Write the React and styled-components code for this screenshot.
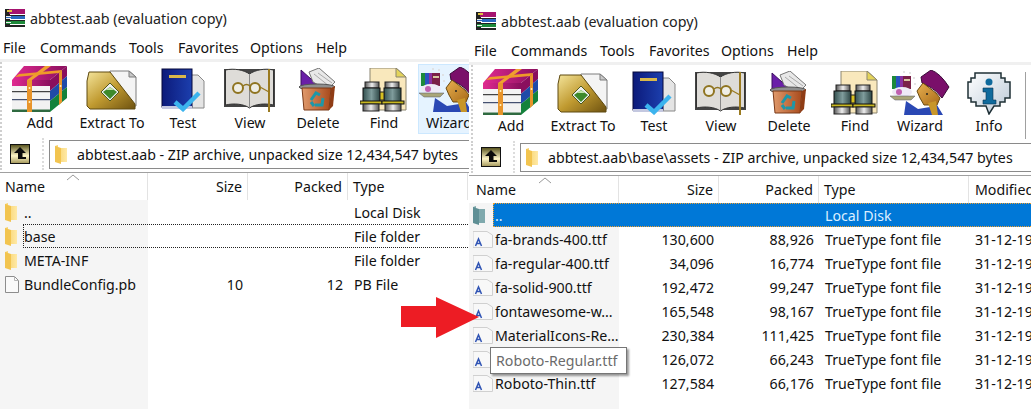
import React from "react";
import styled, { createGlobalStyle } from "styled-components";

const Global = createGlobalStyle`
  html, body { margin: 0; padding: 0; background: #fff; }
  #root { width: 1031px; height: 409px; overflow: hidden; }
`;

const Stage = styled.div`
  position: relative;
  display: flex;
  width: 1031px;
  height: 409px;
  overflow: hidden;
  font-family: "Noto Sans", "Open Sans", sans-serif;
  font-size: 14.2px;
  color: #111;
  background: #fff;
`;
const Window = styled.section`
  flex: 0 0 ${(p) => p.$width}px;
  width: ${(p) => p.$width}px;
  padding-top: ${(p) => p.$top}px;
  box-sizing: border-box;
  display: flex;
  flex-direction: column;
  overflow: hidden;
  background: #fff;
`;
const TitleBar = styled.div`
  height: 36px;
  display: flex;
  align-items: center;
  gap: 5px;
  padding: 0 0 0 ${(p) => 5 + p.$inset}px;
  font-size: 14.3px;
  color: #222;
`;
const MenuBar = styled.div`
  height: 23px;
  display: flex;
  align-items: center;
  padding-left: ${(p) => p.$inset}px;
  border-bottom: 3px solid #f0f0f0;
`;
const MenuItem = styled.span`
  width: ${(p) => p.$w}px;
  padding-left: 3px;
  box-sizing: border-box;
  flex: none;
`;
const Toolbar = styled.div`
  height: 74px;
  display: flex;
  padding-left: 2px;
  margin-left: ${(p) => p.$inset}px;
  align-items: stretch;
  overflow: hidden;
  border-left: 2px dotted #cfcfcf;
`;
const ToolButton = styled.div`
  flex: none;
  width: ${(p) => p.$w}px;
  margin-left: ${(p) => p.$ml || 0}px;
  margin-top: 2px;
  height: 70px;
  box-sizing: border-box;
  display: flex;
  flex-direction: column;
  align-items: center;
  padding-top: 2px;
  white-space: nowrap;
  ${(p) => p.$hover && "background:#e5f3ff;outline:1px solid #cce8ff;outline-offset:-1px;"}
`;
const IconSlot = styled.div`
  height: 46px;
  display: flex;
  align-items: flex-end;
  justify-content: center;
`;
const ToolLabel = styled.span`
  margin-top: 1px;
  line-height: 20px;
`;
const ToolSep = styled.div`
  flex: none;
  width: 1px;
  margin-top: 7px;
  background: #a0a0a0;
`;
const AddressRow = styled.div`
  height: 37px;
  display: flex;
  align-items: center;
  padding-left: ${(p) => p.$inset}px;
  border-bottom: 1px solid #a0a0a0;
  box-sizing: border-box;
`;
const Grip = styled.div`
  flex: none;
  width: 44px;
  height: 32px;
  box-sizing: border-box;
  display: flex;
  align-items: center;
  padding-left: 8px;
  border-left: 2px dotted #cfcfcf;
  border-right: 2px dotted #dcdcdc;
`;
const AddressBox = styled.div`
  flex: 1;
  min-width: 0;
  height: 29px;
  margin: 0 -3px 0 5px;
  box-sizing: border-box;
  border: 1px solid #8a8a8a;
  display: flex;
  align-items: center;
  gap: 9px;
  padding-left: 5px;
  white-space: nowrap;
`;
const Header = styled.div`
  height: 27px;
  display: grid;
  grid-template-columns: ${(p) => p.$columns};
  position: relative;
`;
const HeadCell = styled.div`
  display: flex;
  align-items: center;
  box-sizing: border-box;
  border-right: 1px solid #e3e3e3;
  padding: 0 5px 0 ${(p) => p.$pad}px;
  justify-content: ${(p) => (p.$right ? "flex-end" : "flex-start")};
  white-space: nowrap;
  overflow: hidden;
`;
const SortCaret = styled.svg`
  position: absolute;
  left: ${(p) => p.$left}px;
  top: 1px;
`;
const List = styled.div`
  flex: 1;
  background: linear-gradient(to right, #f5f5f5 ${(p) => p.$name}px, #fff ${(p) => p.$name}px);
`;
const Row = styled.div`
  height: 24px;
  display: flex;
  align-items: stretch;
`;
const RowIcon = styled.div`
  flex: none;
  width: ${(p) => p.$w}px;
  box-sizing: border-box;
  display: flex;
  align-items: center;
  padding-left: ${(p) => p.$pad}px;
`;
const RowBody = styled.div`
  flex: 1;
  display: grid;
  grid-template-columns: ${(p) => p.$columns};
  box-sizing: border-box;
  align-items: center;
  border: 1px dotted ${(p) => (p.$selected ? "#f0a030" : p.$focus ? "#222" : "transparent")};
  ${(p) => p.$selected && "background:#0078d7;color:#dcefff;"}
`;
const Cell = styled.span`
  box-sizing: border-box;
  padding: ${(p) => (p.$right ? "0 6px 0 0" : "0 0 0 " + (p.$pad ?? 5) + "px")};
  text-align: ${(p) => (p.$right ? "right" : "left")};
  white-space: nowrap;
  overflow: hidden;
`;
const Tooltip = styled.div`
  position: absolute;
  left: 490px;
  top: 347px;
  width: 137px;
  height: 27px;
  box-sizing: border-box;
  background: #fff;
  border: 1px solid #767676;
  box-shadow: 2px 2px 2px rgba(0,0,0,.4);
  color: #6b6b6b;
  padding-left: 5px;
  line-height: 25px;
  white-space: nowrap;
`;
const Arrow = styled.svg`
  position: absolute;
  left: 401px;
  top: 297px;
`;

const Defs = () => (
  <svg width="0" height="0" style={{ position: "absolute" }} aria-hidden="true">
    <defs>
      <linearGradient id="gold" x1="0" y1="0" x2="1" y2="1">
        <stop offset="0" stopColor="#f4e49a" />
        <stop offset=".5" stopColor="#c09a30" />
        <stop offset="1" stopColor="#6e5210" />
      </linearGradient>
      <linearGradient id="folder" x1="0" y1="0" x2="1" y2="0">
        <stop offset="0" stopColor="#f6cf62" />
        <stop offset="1" stopColor="#ffe9a6" />
      </linearGradient>
      <linearGradient id="navy" x1="0" y1="0" x2="1" y2="0">
        <stop offset="0" stopColor="#0c1a7a" />
        <stop offset="1" stopColor="#1c3fae" />
      </linearGradient>
      <linearGradient id="steel" x1="0" y1="0" x2="1" y2="0">
        <stop offset="0" stopColor="#33504f" />
        <stop offset=".5" stopColor="#7f9c9c" />
        <stop offset="1" stopColor="#2c4544" />
      </linearGradient>
      <linearGradient id="chrome" x1="0" y1="0" x2="1" y2="0">
        <stop offset="0" stopColor="#555" />
        <stop offset=".5" stopColor="#eee" />
        <stop offset="1" stopColor="#555" />
      </linearGradient>
      <linearGradient id="brown" x1="0" y1="0" x2="1" y2="0">
        <stop offset="0" stopColor="#e09a6c" />
        <stop offset="1" stopColor="#a84a1c" />
      </linearGradient>
      <linearGradient id="up" x1="0" y1="0" x2="0" y2="1">
        <stop offset="0" stopColor="#5a5520" />
        <stop offset=".6" stopColor="#fff6c8" />
        <stop offset="1" stopColor="#a89c60" />
      </linearGradient>
      <linearGradient id="bubble" x1="0" y1="0" x2="1" y2="1">
        <stop offset="0" stopColor="#fff" />
        <stop offset="1" stopColor="#b9c8d6" />
      </linearGradient>
      <linearGradient id="face" x1="0" y1="0" x2="1" y2="1">
        <stop offset="0" stopColor="#e8b050" />
        <stop offset="1" stopColor="#a86a18" />
      </linearGradient>
      <linearGradient id="magenta" x1="0" y1="0" x2="1" y2="0">
        <stop offset="0" stopColor="#e02a90" />
        <stop offset="1" stopColor="#8a0f5e" />
      </linearGradient>
      <linearGradient id="paper" x1="0" y1="0" x2="1" y2="1">
        <stop offset="0" stopColor="#f6f6f6" />
        <stop offset="1" stopColor="#c4c4c4" />
      </linearGradient>
    </defs>
  </svg>
);

const RarIcon = () => (
  <svg width="56" height="46" viewBox="0 0 56 46">
    <polygon points="12,0 55,0 38,14 0,14" fill="url(#magenta)" />
    <rect x="0" y="14" width="38" height="6" fill="url(#magenta)" />
    <rect x="0" y="20" width="38" height="5" fill="#f4f4f4" />
    <rect x="0" y="25" width="38" height="1.5" fill="#444" />
    <rect x="0" y="26.5" width="38" height="7" fill="#f4f4f4" />
    <rect x="0" y="33" width="38" height="1.5" fill="#445070" />
    <rect x="0" y="34.5" width="38" height="9" fill="#f2f2f2" />
    <rect x="0" y="43.5" width="38" height="2.5" fill="#2f6a40" />
    <polygon points="38,14 55,0 55,10 38,25" fill="#8a0f5e" />
    <polygon points="38,25 55,10 55,21 38,35" fill="#1f4aa8" />
    <polygon points="38,35 55,21 55,32 38,46" fill="#14823c" />
    <polygon points="15,14 20,14 39,0 33,0" fill="#f0a030" />
    <polygon points="7,8 50,4 47,7 3,11" fill="#ee9a2a" />
    <rect x="15" y="14" width="5" height="32" fill="#e8942a" />
    <polygon points="47,7 50,4 50,36 47,39" fill="#e8942a" />
    <circle cx="17.500" cy="22" r="1" fill="#fff3c0" />
    <circle cx="17.500" cy="36" r="1" fill="#fff3c0" />
    <circle cx="48.500" cy="20" r="1" fill="#fff3c0" />
  </svg>
);
const SmallRar = () => (
  <svg width="20" height="20" viewBox="0 0 20 20">
    <polygon points="0,1 5,1 5,19 0,19" fill="#222" />
    <polygon points="4,1 20,1 20,6 4,6" fill="#a5136f" />
    <rect x="1" y="7" width="19" height="1" fill="#222" />
    <rect x="1" y="8" width="19" height="3" fill="#2a6ac0" />
    <rect x="1" y="12" width="19" height="1" fill="#222" />
    <rect x="1" y="13" width="19" height="3" fill="#1d8a3a" />
    <rect x="1" y="17" width="19" height="2" fill="#222" />
    <rect x="2" y="2" width="5" height="2" fill="#e0c040" />
    <rect x="1" y="8" width="5" height="1" fill="#eee" />
    <rect x="1" y="10" width="5" height="1" fill="#eee" />
    <rect x="1" y="14" width="5" height="1" fill="#eee" />
  </svg>
);
const ExtractIcon = () => (
  <svg width="52" height="44" viewBox="0 0 52 44">
    <polygon points="24,3 43,3 50,9 50,38 24,38" fill="#f4f4f4" stroke="#7d7d7d" />
    <polygon points="43,3 43,9 50,9" fill="#c8c8c8" stroke="#7d7d7d" />
    <polygon points="1,13 3,4 24,4 49,36 49,41 4,41 1,38" fill="url(#gold)" stroke="#5e4a10" />
    <polygon points="24,33 15,24 24,15 33,24" fill="#f0f0f0" stroke="#4d5a20" />
    <polygon points="24,31 17,24 24,19 31,24" fill="#3d8a2c" />
    <polygon points="24,19 20,22 28,22" fill="#c0e4a8" />
  </svg>
);
const TestIcon = () => (
  <svg width="44" height="44" viewBox="0 0 44 44">
    <polygon points="28,7 37,7 43,13 43,40 28,40" fill="#e4e4e4" stroke="#888" />
    <rect x="1" y="1" width="30" height="38" fill="url(#navy)" stroke="#06083a" />
    <rect x="8" y="7" width="17" height="3" fill="#d9b84a" />
    <rect x="1" y="38" width="30" height="3" fill="#c4c8e0" />
    <path d="M14 34 L22 41 L38 25" fill="none" stroke="#3cb4ee" strokeWidth="4.5" />
  </svg>
);
const ViewIcon = () => (
  <svg width="52" height="44" viewBox="0 0 52 44">
    <rect x="0" y="1" width="51" height="38" fill="#444" />
    <path d="M1.500 2 C10 0 20 2 25.500 6 C31 2 41 0 49.500 2 V37 C41 35 31 36 25.500 40 C20 36 10 35 1.500 37 Z" fill="#dedcd8" stroke="#333" />
    <line x1="25.500" y1="6" x2="25.500" y2="40" stroke="#888" />
    <circle cx="14" cy="20" r="5" fill="#efeee6" stroke="#8f7420" strokeWidth="2" />
    <circle cx="31" cy="20" r="5" fill="#efeee6" stroke="#8f7420" strokeWidth="2" />
    <path d="M19 18 Q22.500 15 26 18" fill="none" stroke="#8f7420" strokeWidth="1.5" />
    <path d="M45 1 V44" stroke="#9a7a20" strokeWidth="2" />
    <path d="M36 19 L45 24" stroke="#9a7a20" strokeWidth="1.300" />
  </svg>
);
const DeleteIcon = () => (
  <svg width="38" height="44" viewBox="0 0 38 44">
    <polygon points="2,2 2,20 22,20" fill="#6a1fa8" stroke="#3c1060" />
    <polygon points="10,4 20,0 36,14 28,22 14,14" fill="#e8e8e8" stroke="#777" />
    <path d="M15 6 L30 18 M19 5 L33 15" stroke="#aaa" />
    <ellipse cx="18" cy="19" rx="18" ry="3" fill="#8f8f8f" stroke="#555" />
    <polygon points="3,20 32,20 30,42 5,42" fill="url(#brown)" stroke="#7a3a18" />
    <polygon points="32,20 36,18 34,38 30,42" fill="#8f3c15" />
    <path d="M12 32 L17 25 L21 27 M24 30 L23 37 L16 37 M12 34 L15 38" fill="none" stroke="#1d97a8" strokeWidth="3" />
  </svg>
);
const FindIcon = () => (
  <svg width="48" height="44" viewBox="0 0 48 44">
    <polygon points="10,0 36,0 46,9 46,42 10,42" fill="#f9e8bc" stroke="#8b8570" />
    <polygon points="36,0 36,9 46,9" fill="#e4d45a" stroke="#8b8570" />
    <rect x="5" y="14" width="14" height="6" fill="url(#chrome)" stroke="#222" />
    <rect x="25" y="14" width="14" height="6" fill="url(#chrome)" stroke="#222" />
    <rect x="3" y="20" width="17" height="14" fill="url(#steel)" stroke="#111" />
    <rect x="24" y="20" width="17" height="14" fill="url(#steel)" stroke="#111" />
    <rect x="20" y="24" width="4" height="8" fill="#d6c020" stroke="#222" />
    <rect x="0" y="33" width="22" height="3" fill="#c8b820" stroke="#111" />
    <rect x="22" y="33" width="22" height="3" fill="#c8b820" stroke="#111" />
    <rect x="3" y="36" width="16" height="7" fill="url(#chrome)" stroke="#222" />
    <rect x="25" y="36" width="16" height="7" fill="url(#chrome)" stroke="#222" />
  </svg>
);
const WizardIcon = () => (
  <svg width="60" height="45" viewBox="0 0 60 45">
    <rect x="2" y="6" width="19" height="13" fill="#7a2048" />
    <rect x="2" y="6" width="4" height="13" fill="#1d8a3a" />
    <rect x="6" y="6" width="4" height="13" fill="#2a52c0" />
    <rect x="10" y="6" width="3" height="13" fill="#8a30a0" />
    <rect x="14" y="9" width="6" height="2" fill="#d8c8a0" />
    <ellipse cx="12" cy="22" rx="10" ry="5" fill="#eeeaf6" />
    <circle cx="9" cy="22" r="3" fill="#c060b0" />
    <path d="M0 26 H25 L21 30 H5 Z" fill="#a9a678" stroke="#556" strokeWidth=".5" />
    <circle cx="20" cy="3" r="1" fill="#ddd" /><circle cx="24" cy="8" r="1" fill="#ddd" /><circle cx="25" cy="14" r="1" fill="#ddd" /><circle cx="14" cy="2" r="1" fill="#ddd" />
    <path d="M31 7 L41 0 Q50 3 59 17 L52 28 Q46 20 40 17 L32 13 Z" fill="#7a0f6a" stroke="#3a0a38" />
    <polygon points="27,21 33,13 46,23 50,28 47,35 34,35 30,28" fill="url(#face)" stroke="#6a4a10" />
    <polygon points="14,45 16,31 28,39 40,37 47,35 53,45" fill="#2a48b4" />
    <polygon points="38,33 46,31 48,45 42,45" fill="#c89628" />
    <circle cx="37" cy="24" r="1" fill="#222" />
  </svg>
);
const InfoIcon = () => (
  <svg width="44" height="44" viewBox="0 0 44 44">
    <path d="M8 2 H34 V7 H38 V11 H43 V27 H38 V31 H33 V35 H27 L22 43 L19 35 H9 V31 H4 V27 H1 V11 H4 V7 H8 Z" fill="url(#bubble)" stroke="#1f3036" strokeWidth="1.500" />
    <circle cx="22" cy="11" r="3.500" fill="#0f6a9c" />
    <path d="M16 17 H26 V29 H29 V33 H16 V29 H19 V21 H16 Z" fill="#0f6a9c" stroke="#0a3350" strokeWidth=".6" />
  </svg>
);
const UpIcon = () => (
  <svg width="20" height="20" viewBox="0 0 20 20">
    <rect width="20" height="20" fill="#111" />
    <rect x="1" y="1" width="18" height="18" fill="url(#up)" />
    <path d="M10 3 L16 9 H12.500 V13 H16 V15 H8 V9 H4 Z" fill="#0c0c0c" />
  </svg>
);
const FolderIcon = ({ teal }) => (
  <svg width="13" height="19" viewBox="0 0 13 19">
    <polygon points="0,1 3,0 3,3 12,3 12,17 0,17" fill={teal ? "#7fa9ad" : "url(#folder)"} />
    <polygon points="0,1 6,3 6,19 0,17" fill={teal ? "#5f8f95" : "#f2c44f"} />
  </svg>
);
const PageIcon = () => (
  <svg width="14" height="17" viewBox="0 0 14 17">
    <path d="M.5 .5 H9.5 L13.5 4.5 V16.5 H.5 Z" fill="#fafafa" stroke="#8d8d8d" />
    <path d="M9.5 .5 V4.5 H13.5" fill="none" stroke="#b5b5b5" />
  </svg>
);
const FontIcon = () => (
  <svg width="20" height="17" viewBox="0 0 20 17">
    <path d="M0 .5 H14 L19.500 4 V16.500 H0 Z" fill="#f8f8f8" stroke="#d0d0d0" />
    <path d="M2.500 15 L5.500 8 L8.500 15 M4 12.500 H7" fill="none" stroke="#3054b4" strokeWidth="1.500" />
  </svg>
);

const tools = [
  ["Add", 72, 0, <RarIcon key="i" />],
  ["Extract To", 72, 0, <ExtractIcon key="i" />],
  ["Test", 70, 0, <TestIcon key="i" />],
  ["View", 64, 0, <ViewIcon key="i" />],
  ["Delete", 72, 0, <DeleteIcon key="i" />],
  ["Find", 60, 0, <FindIcon key="i" />],
  ["Wizard", 62, 4, <WizardIcon key="i" />],
  ["Info", 72, 2, <InfoIcon key="i" />],
];
const menus = [["File", 37], ["Commands", 89], ["Tools", 49], ["Favorites", 72], ["Options", 66], ["Help", 50]];

const WindowChrome = ({ inset, top, width, address, nameW, hoverWizard, sep, rows, iconW, iconPad, caret, labelPad, modified, toolCount }) => {
  const tail = modified ? " 150px 200px" : " 120px";
  const head = `${nameW}px 100px 100px${tail}`;
  const body = `${nameW - iconW}px 100px 100px${tail}`;
  return (
    <Window $width={width} $top={top}>
      <TitleBar $inset={inset}><SmallRar />abbtest.aab (evaluation copy)</TitleBar>
      <MenuBar $inset={inset}>
        {menus.map(([m, w]) => <MenuItem key={m} $w={w}>{m}</MenuItem>)}
      </MenuBar>
      <Toolbar $inset={inset}>
        {tools.slice(0, toolCount).map(([label, w, ml, icon]) => (
          <ToolButton key={label} $w={w} $ml={ml} $hover={hoverWizard && label === "Wizard"}>
            <IconSlot>{icon}</IconSlot>
            <ToolLabel>{label}</ToolLabel>
          </ToolButton>
        ))}
        {sep && <ToolSep />}
      </Toolbar>
      <AddressRow $inset={inset}>
        <Grip><UpIcon /></Grip>
        <AddressBox><FolderIcon />{address}</AddressBox>
      </AddressRow>
      <Header $columns={head}>
        <HeadCell $pad={nameW === 150 ? 7 : 5}>Name</HeadCell>
        <HeadCell $pad={0} $right>Size</HeadCell>
        <HeadCell $pad={0} $right>Packed</HeadCell>
        <HeadCell $pad={5}>Type</HeadCell>
        {modified && <HeadCell $pad={6}>Modified</HeadCell>}
        <SortCaret $left={caret} width="14" height="7" viewBox="0 0 14 7"><path d="M1 6 L7 1 L13 6" fill="none" stroke="#9a9a9a" /></SortCaret>
      </Header>
      <List $name={nameW}>
        {rows.map((r) => (
          <Row key={r.name}>
            <RowIcon $w={iconW} $pad={iconPad}>{r.icon}</RowIcon>
            <RowBody $columns={body} $selected={r.selected} $focus={r.focus}>
              <Cell $pad={labelPad}>{r.name}</Cell>
              <Cell $right>{r.size}</Cell>
              <Cell $right>{r.packed}</Cell>
              <Cell>{r.type}</Cell>
              {modified && <Cell>{r.date}</Cell>}
            </RowBody>
          </Row>
        ))}
      </List>
    </Window>
  );
};

const leftRows = [
  { name: "..", type: "Local Disk", icon: <FolderIcon /> },
  { name: "base", type: "File folder", icon: <FolderIcon />, focus: true },
  { name: "META-INF", type: "File folder", icon: <FolderIcon /> },
  { name: "BundleConfig.pb", size: "10", packed: "12", type: "PB File", icon: <PageIcon /> },
];
const ttf = "TrueType font file";
const d = "31-12-1980";
const rightRows = [
  { name: "..", type: "Local Disk", icon: <FolderIcon teal />, selected: true },
  { name: "fa-brands-400.ttf", size: "130,600", packed: "88,926", type: ttf, date: d, icon: <FontIcon /> },
  { name: "fa-regular-400.ttf", size: "34,096", packed: "16,774", type: ttf, date: d, icon: <FontIcon /> },
  { name: "fa-solid-900.ttf", size: "192,472", packed: "99,247", type: ttf, date: d, icon: <FontIcon /> },
  { name: "fontawesome-w...", size: "165,548", packed: "98,167", type: ttf, date: d, icon: <FontIcon /> },
  { name: "MaterialIcons-Re...", size: "230,384", packed: "111,425", type: ttf, date: d, icon: <FontIcon /> },
  { name: "Roboto-Regular.ttf", size: "126,072", packed: "66,243", type: ttf, date: d, icon: <FontIcon /> },
  { name: "Roboto-Thin.ttf", size: "127,584", packed: "66,176", type: ttf, date: d, icon: <FontIcon /> },
];

export default function App() {
  return (
    <Stage>
      <Global />
      <Defs />
      <WindowChrome inset={0} top={0} width={469} nameW={148} iconW={23} iconPad={5} labelPad={0} caret={66} toolCount={7}
        address="abbtest.aab - ZIP archive, unpacked size 12,434,547 bytes" rows={leftRows} hoverWizard />
      <WindowChrome inset={2} top={3} width={562} nameW={150} iconW={24} iconPad={4} labelPad={1} caret={69} toolCount={8} modified
        address={"abbtest.aab\\base\\assets - ZIP archive, unpacked size 12,434,547 bytes"} rows={rightRows} sep />
      <Arrow width="78" height="41" viewBox="0 0 78 41">
        <polygon points="0,9 35,9 35,0 78,20 35,41 35,30 0,30" fill="#ed1c24" />
      </Arrow>
      <Tooltip>Roboto-Regular.ttf</Tooltip>
    </Stage>
  );
}
